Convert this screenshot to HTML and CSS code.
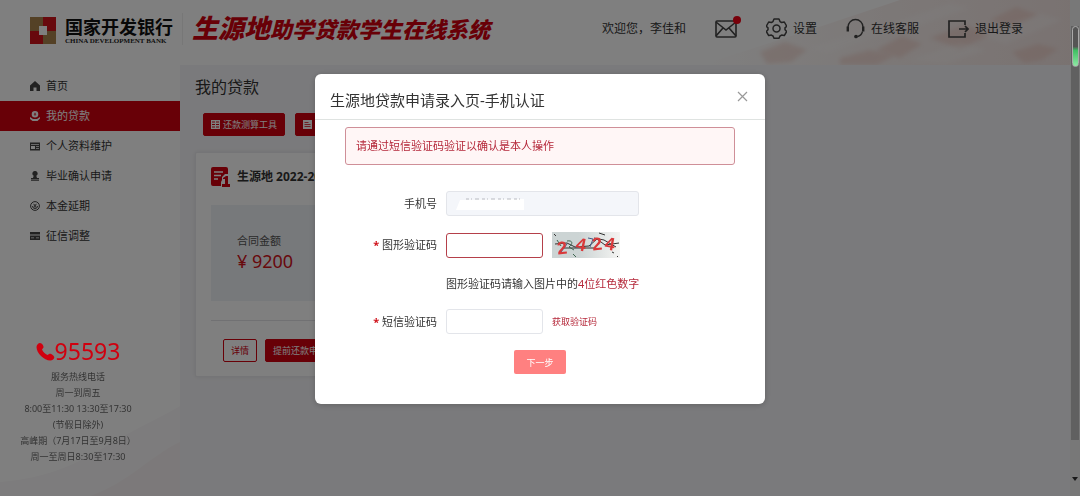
FILE: index.html
```html
<!DOCTYPE html>
<html lang="zh-CN">
<head>
  <meta charset="UTF-8" />
  <meta name="viewport" content="width=device-width, initial-scale=1.0"/>
  <title>生源地助学贷款学生在线系统</title>
  <link rel="stylesheet" href="styles.css">
</head>
<body>

<header class="header">
  <svg class="header-art" viewBox="0 0 380 65" preserveAspectRatio="xMaxYMin slice">
    <defs>
      <linearGradient id="glow" x1="0" y1="0" x2="1" y2="0">
        <stop offset="0" stop-color="#f3e2de" stop-opacity="0"/>
        <stop offset="0.5" stop-color="#f3e2de" stop-opacity="0.5"/>
        <stop offset="1" stop-color="#f0dedb" stop-opacity="0.8"/>
      </linearGradient>
      <filter id="soft"><feGaussianBlur stdDeviation="2"/></filter>
    </defs>
    <path d="M0 65 L110 30 L200 0 H380 V65z" fill="url(#glow)"/>
    <g fill="#e8b8ac" opacity="0.35" filter="url(#soft)">
      <path d="M60 52l25-10 22 8-16 12-24 2z"/>
      <path d="M140 58l30-8 24 6-18 9h-36z"/>
      <path d="M176 50l26-14 20 8-22 14z"/>
      <path d="M230 38l34-13 26 10-30 14z"/>
      <path d="M312 52l26-8 20 5-16 11-18 3z"/>
      <path d="M290 20l26-13 22 8-24 12z"/>
    </g>
    <g fill="#fff" opacity="0.3" filter="url(#soft)">
      <path d="M110 48l60-20 18 5-60 20z"/>
      <path d="M210 60l50-17 26 7-40 14z"/>
      <path d="M280 36l60-22 22 6-56 24z"/>
      <path d="M190 24l60-21 20 5-58 20z"/>
    </g>
  </svg>

  <div class="brand">
    <svg class="brand-mark" viewBox="0 0 26 27">
      <path fill="#a8824c" d="M0 0h13v9H9v5H0z"/>
      <path fill="#d0121b" d="M13 0h13v14h-9V9h-4z"/>
      <path fill="#d0121b" d="M0 14h9v4h4v9H0z"/>
      <path fill="#a8824c" d="M17 14h9v13H13v-9h4z"/>
      <path fill="#fff" d="M9 9h8v9H9z"/>
    </svg>
    <div class="brand-name">
      <span class="brand-cn">国家开发银行</span>
      <span class="brand-en">CHINA DEVELOPMENT BANK</span>
    </div>
  </div>
  <h1 class="system-name"><span class="system-big">生源地</span>助学贷款学生在线系统</h1>

  <nav class="top-nav">
    <span>欢迎您，李佳和</span>
    <a href="#" class="mail" aria-label="消息">
      <svg width="22" height="18" viewBox="0 0 22 18" fill="none" stroke="#444" stroke-width="1.6">
        <rect x="1" y="1" width="20" height="16" rx="1"/>
        <path d="M1 2l10 8 10-8M1 16l7-8M21 16l-7-8"/>
      </svg>
      <i class="dot"></i>
    </a>
    <a href="#">
      <svg width="21" height="21" viewBox="0 0 21 21" fill="none" stroke="#444" stroke-width="1.5">
        <path stroke-linejoin="round" d="M8 1h5l1 2.6 1.6.9 2.7-.5 2.4 4.2-1.7 1.7v1.8l1.7 1.7-2.4 4.2-2.7-.5-1.6.9-1 2.3h-5l-1-2.3-1.6-.9-2.7.5-2.4-4.2 1.7-1.7v-1.800l-1.700-1.700 2.400-4.200 2.700.5 1.600-.9z"/>
        <circle cx="10.500" cy="10.600" r="3.500"/>
      </svg>
      设置
    </a>
    <a href="#">
      <svg width="19" height="21" viewBox="0 0 19 21" fill="none" stroke="#444" stroke-width="1.300">
        <path d="M2 12V9a7.500 7.500 0 0 1 15 0v3"/>
        <path stroke-width="2.400" d="M1.800 8.500v5M17.200 8.500v5"/>
        <path d="M16.500 13.500c-.8 3-2.500 4.500-5 5"/>
        <circle cx="10" cy="18.500" r="1.200" fill="#444"/>
      </svg>
      在线客服
    </a>
    <a href="#">
      <svg width="21" height="18" viewBox="0 0 21 18" fill="none" stroke="#444" stroke-width="1.700">
        <path d="M17 5V1H1v16h16v-4"/>
        <path d="M11 9h9M17 6l3 3-3 3"/>
      </svg>
      退出登录
    </a>
  </nav>
</header>

<div class="layout">
  <aside class="sidebar">
    <nav class="menu">
      <a href="#">
        <svg viewBox="0 0 10 10"><path d="M5 0L0 4.500V10h3.500V6.500h3V10H10V4.500z"/></svg>首页
      </a>
      <a href="#" class="active">
        <svg viewBox="0 0 10 10"><path fill-rule="evenodd" d="M5 0a3.300 3.300 0 1 1 0 6.600A3.300 3.300 0 0 1 5 0zM3.800 1.800l.8 1.200h-.8v.6h.9V5h.6V3.600h.9V3h-.8l.8-1.200h-.6L5 2.700l-.6-.9zM0 6l3 2h4l3-2v1.500L7.500 10h-5L0 8z"/></svg>我的贷款
      </a>
      <a href="#">
        <svg viewBox="0 0 10 10"><path fill-rule="evenodd" d="M0 1.500h10v8H0zM1 3v.8h8V3zM1 5v3h4V5zM6 5v.8h3V5zM6 7v.8h3V7z"/></svg>个人资料维护
      </a>
      <a href="#">
        <svg viewBox="0 0 10 10"><path d="M5 0a2.500 2.500 0 0 1 1.300 4.700L7 7h2v1.500H1V7h2l.7-2.300A2.500 2.500 0 0 1 5 0zM1 9.200h8v.8H1z"/></svg>毕业确认申请
      </a>
      <a href="#">
        <svg class="line-icon" viewBox="0 0 10 10"><circle cx="5" cy="5" r="4.400"/><path d="M2.500 5a2.500 2.500 0 0 0 5 0M3.500 2.800L5 4.600l1.500-1.800M5 4.600v2M3.800 5h2.400"/></svg>本金延期
      </a>
      <a href="#">
        <svg viewBox="0 0 10 10"><path fill-rule="evenodd" d="M0 1h10v2.500H0zM0 4.500h10V9H0zM1 6.500v.8h3v-.8zM6 6.500v.8h3v-.8z"/></svg>征信调整
      </a>
    </nav>

    <div class="hotline">
      <div class="hotline-number">
        <svg width="19" height="19" viewBox="0 0 19 19"><path d="M4 1c2 0 4 3 3.500 4.500L6 7.500c1 2.500 3 4.500 5.500 5.500l2-1.300c1.500-.4 4.800 1.800 4.800 3.600 0 1.500-2 3.200-4 3.200C8 18.500.5 11 .5 5 .5 3 2.500 1 4 1z"/></svg>95593
      </div>
      <p>服务热线电话</p>
      <p>周一到周五</p>
      <p>8:00至11:30 13:30至17:30</p>
      <p>(节假日除外)</p>
      <p>高峰期（7月17日至9月8日）</p>
      <p>周一至周日8:30至17:30</p>
    </div>
    <svg class="side-art" viewBox="0 0 180 90" preserveAspectRatio="none">
      <path d="M0 76c50-4 80-20 110-38S160 12 180 0v90H0z" fill="#fbf9fa"/>
      <path d="M90 90c40-14 60-40 90-54v54z" fill="#f8f3f4"/>
    </svg>
  </aside>

  <main class="main">
    <h2>我的贷款</h2>
    <div class="tools">
      <button type="button" class="btn btn-red">
        <svg viewBox="0 0 9 9" fill="#fff"><path fill-rule="evenodd" d="M0 0h9v9H0zM1 1.500v1h3v-1zM5 1.500v1h3v-1zM1 4v1h3V4zM5 4v1h3V4zM1 6.500v1h3v-1zM5 6.500v1h3v-1z"/></svg>还款测算工具
      </button>
      <button type="button" class="btn btn-red">
        <svg viewBox="0 0 9 9" fill="#fff"><path fill-rule="evenodd" d="M0 0h9v9H0zM1.500 2v.7h4V2zM1.500 4v.7h6V4zM1.500 6v.7h6V6z"/></svg>首贷指南
      </button>
    </div>

    <section class="card">
      <h3>
        <svg width="19" height="20" viewBox="0 0 19 20">
          <path fill="#d0000f" d="M2 0h13a2 2 0 0 1 2 2v5h-3l-3 3v3l-1 2v4H2a2 2 0 0 1-2-2V2a2 2 0 0 1 2-2z"/>
          <path stroke="#fff" stroke-width="1.300" d="M3 5h9M3 8.500h7M3 12h4"/>
          <path fill="#d0000f" d="M12 11l3-2h2v8h2v3h-8v-3h3v-5h-2z"/>
        </svg>
        生源地 2022-2023
      </h3>
      <div class="amount-box">
        <span class="amount-label">合同金额</span>
        <span class="amount">¥ 9200</span>
      </div>
      <div class="card-actions">
        <button type="button" class="btn btn-line">详情</button>
        <button type="button" class="btn btn-red">提前还款申请</button>
      </div>
    </section>
  </main>
</div>

<div class="scrollbar">
  <div class="scroll-thumb"></div>
  <svg width="6" height="4" viewBox="0 0 6 4"><path d="M0 0h6L3 4z" fill="#333"/></svg>
</div>

<div class="overlay">
  <div class="modal" role="dialog" aria-labelledby="modalTitle">
    <div class="modal-header">
      <h2 id="modalTitle">生源地贷款申请录入页-手机认证</h2>
      <button type="button" class="close" aria-label="关闭">
        <svg width="11" height="11" viewBox="0 0 11 11"><path d="M1 1l9 9M10 1l-9 9" stroke="#999" stroke-width="1.200"/></svg>
      </button>
    </div>
    <form class="modal-body">
      <div class="alert">请通过短信验证码验证以确认是本人操作</div>
      <div class="row">
        <label for="phone">手机号</label>
        <div class="phone-field">
          <input type="text" id="phone" class="wide" disabled />
          <svg class="phone-mask" viewBox="0 0 68 13">
            <path d="M4 2l64-1v11H0z" fill="#fff"/>
            <path d="M10 1h56" stroke="#a9acb3" stroke-width="0.800" stroke-dasharray="3 2 1 3 4 3"/>
          </svg>
        </div>
      </div>
      <div class="row">
        <label for="captcha"><b>*</b> 图形验证码</label>
        <input type="text" id="captcha" class="invalid" />
        <svg class="captcha" width="68" height="26" viewBox="0 0 68 26" role="img" aria-label="图形验证码">
          <defs>
            <linearGradient id="paper" x1="0" y1="0" x2="1" y2="0">
              <stop offset="0.400" stop-color="#ccd4d4"/>
              <stop offset="1" stop-color="#f4f4f2"/>
            </linearGradient>
          </defs>
          <rect width="68" height="26" fill="url(#paper)"/>
          <g fill="none" stroke="#333" stroke-width="1">
            <path d="M3 12l12-1 8 4 14-1 8-7 8 6 14-2"/>
            <path d="M12 16h32M42 6l10 2 12 7"/>
            <path stroke="#3e6650" d="M5 8l4 6M15 9c6-1 6 3 2 6l5 3M21 22l3 3"/>
            <path stroke="#455c8a" d="M36 6l5 1-3 8M9 20l6-8"/>
            <path d="M2 2l2 2M47 1l6 2M60 20l2 1M65 24l1 1"/>
          </g>
          <g class="captcha-digits">
            <text x="5" y="22" transform="rotate(-6 10 16)">2</text>
            <text x="24" y="19" transform="rotate(12 30 13)">4</text>
            <text x="40" y="18" transform="rotate(-6 45 12)">2</text>
            <text x="53" y="18" transform="rotate(10 58 12)">4</text>
          </g>
        </svg>
      </div>
      <p class="hint">图形验证码请输入图片中的<em>4位红色数字</em></p>
      <div class="row">
        <label for="sms"><b>*</b> 短信验证码</label>
        <input type="text" id="sms" />
        <a href="#" class="get-code">获取验证码</a>
      </div>
      <button type="submit" class="next">下一步</button>
    </form>
  </div>
</div>

<div class="meter"></div>

</body>
</html>
```
FILE: styles.css
```css
* {
  box-sizing: border-box;
}

body {
  margin: 0;
  min-height: 100vh;
  display: flex;
  flex-direction: column;
  overflow: hidden;
  font-family: "Noto Sans", "Noto Sans CJK SC", sans-serif;
  font-size: 11px;
  line-height: 16px;
  color: #333;
  background: #f5f5f8;
}

h1, h2, h3, p {
  margin: 0;
  font-weight: 400;
}

a {
  color: inherit;
  text-decoration: none;
}

button, input {
  font-family: inherit;
}

svg {
  flex: none;
}

/* Header */
.header {
  position: relative;
  display: flex;
  align-items: center;
  height: 65px;
  padding: 0 57px 8px 30px;
  background: #fff;
}

.header-art {
  position: absolute;
  right: 0;
  top: 0;
  width: 380px;
  height: 65px;
}

.brand {
  display: flex;
  align-items: center;
  gap: 9px;
  padding: 4px 10px 0 0;
  border-right: 1px solid #eee;
}

.brand-mark {
  width: 26px;
  height: 27px;
}

.brand-name {
  display: flex;
  flex-direction: column;
  width: 107px;
  white-space: nowrap;
}

.brand-cn {
  font-size: 18px;
  line-height: 20px;
  font-weight: 700;
  color: #111;
}

.brand-en {
  font-family: "Liberation Serif", serif;
  font-size: 7px;
  line-height: 8px;
  font-weight: 700;
  color: #222;
}

.system-name {
  padding-left: 9px;
  font-size: 22px;
  line-height: 32px;
  font-weight: 900;
  font-style: italic;
  color: #d0000f;
  white-space: nowrap;
}

.system-big {
  font-size: 26px;
}

.top-nav {
  position: relative;
  display: flex;
  align-items: center;
  gap: 29px;
  margin-left: auto;
  font-size: 12px;
  white-space: nowrap;
}

.top-nav a {
  display: flex;
  align-items: center;
  gap: 6px;
}

.top-nav .mail {
  position: relative;
}

.dot {
  position: absolute;
  top: -4px;
  right: -4px;
  width: 8px;
  height: 8px;
  border-radius: 50%;
  background: #f00014;
}

/* Sidebar */
.layout {
  flex: 1;
  display: flex;
}

.sidebar {
  position: relative;
  width: 180px;
  padding-top: 6px;
  background: #fff;
}

.menu a {
  display: flex;
  align-items: center;
  gap: 6px;
  height: 30px;
  padding-left: 30px;
}

.menu svg {
  width: 10px;
  height: 10px;
  fill: #444;
}

.menu .line-icon {
  fill: none;
  stroke: #444;
}

.menu .active {
  background: #d0000f;
  color: #fff;
}

.menu .active svg {
  fill: #fff;
}

.hotline {
  position: relative;
  z-index: 1;
  margin-top: 88px;
  padding-right: 24px;
  font-size: 9px;
  text-align: center;
  white-space: nowrap;
}

.hotline-number {
  display: flex;
  justify-content: center;
  align-items: center;
  height: 24px;
  margin-bottom: 6px;
  font-size: 23px;
  color: #d0000f;
}

.hotline-number svg {
  fill: #d0000f;
}

.side-art {
  position: absolute;
  left: 0;
  bottom: 0;
  width: 100%;
  height: 90px;
}

/* Main */
.main {
  flex: 1;
  padding: 12px 15px;
}

.main h2 {
  font-size: 16px;
  line-height: 20px;
}

.tools {
  display: flex;
  gap: 10px;
  padding: 16px 8px;
}

.btn {
  display: flex;
  align-items: center;
  gap: 3px;
  height: 23px;
  padding: 0 7px;
  border: 1px solid #d0000f;
  border-radius: 2px;
  font-size: 9px;
  white-space: nowrap;
}

.btn svg {
  width: 9px;
  height: 9px;
}

.btn-red {
  background: #d0000f;
  color: #fff;
}

.btn-line {
  background: #fff;
  color: #d0000f;
}

.card {
  max-width: 480px;
  padding: 14px 15px;
  background: #fff;
  border: 1px solid #eaeaee;
  border-radius: 2px;
  box-shadow: 0 0 4px rgba(0, 0, 0, 0.08);
}

.card h3 {
  display: flex;
  align-items: center;
  gap: 7px;
  font-size: 12px;
  line-height: 20px;
  font-weight: 700;
}

.amount-box {
  display: flex;
  flex-direction: column;
  height: 96px;
  margin-top: 18px;
  padding: 28px 26px;
  background: #eff2f6;
}

.amount-label {
  color: #555;
}

.amount {
  font-size: 18px;
  line-height: 24px;
  color: #d0121b;
}

.card-actions {
  display: flex;
  gap: 8px;
  margin-top: 19px;
  padding: 18px 12px 0;
  border-top: 1px solid #e2e2e6;
}

/* Scrollbar */
.scrollbar {
  position: fixed;
  top: 0;
  right: 0;
  bottom: 0;
  width: 10px;
  display: flex;
  flex-direction: column;
  align-items: center;
  justify-content: space-between;
  padding: 26px 0 15px;
  background: #f1f1f1;
}

.scroll-thumb {
  width: 8px;
  height: calc(100% - 41px);
  background: #c1c1c1;
}

.meter {
  position: fixed;
  top: 26px;
  right: 1px;
  width: 7px;
  height: 41px;
  border: 1px solid #aaa;
  border-radius: 4px;
  background: linear-gradient(#555 50%, #3fbf63 60%, #8fe8a5);
}

/* Modal */
.overlay {
  position: fixed;
  inset: 0;
  padding-top: 74px;
  background: rgba(0, 0, 0, 0.5);
}

.modal {
  width: 450px;
  max-width: 100%;
  margin: 0 auto;
  background: #fff;
  border-radius: 6px;
  box-shadow: 0 1px 6px rgba(0, 0, 0, 0.2);
}

.modal-header {
  display: flex;
  align-items: center;
  justify-content: space-between;
  height: 46px;
  padding: 6px 17px 0 15px;
  border-bottom: 1px solid #dfe3e1;
}

.modal-header h2 {
  font-size: 15px;
  line-height: 24px;
}

.close {
  display: flex;
  padding: 0 0 6px;
  border: none;
  background: none;
}

.modal-body {
  padding: 7px 30px 30px;
}

.alert {
  margin-bottom: 26px;
  padding: 10px;
  border: 1px solid #cf8f98;
  border-radius: 3px;
  background: #fff6f6;
  color: #b5283a;
}

.row {
  display: flex;
  align-items: center;
  gap: 9px;
  margin-bottom: 16px;
}

.row label {
  width: 92px;
  text-align: right;
}

.row b {
  color: #d0121b;
}

.row input {
  width: 97px;
  height: 25px;
  padding: 0 10px;
  border: 1px solid #e3e5ea;
  border-radius: 3px;
  background: #fff;
  font-size: 11px;
}

.row .wide {
  width: 193px;
  background: #f4f6fa;
}

.row .invalid {
  border-color: #b5404a;
}

.phone-field {
  position: relative;
  display: flex;
}

.phone-mask {
  position: absolute;
  left: 10px;
  top: 7px;
  width: 68px;
  height: 13px;
}

.captcha-digits {
  fill: #d9393b;
  font-family: "Liberation Sans", sans-serif;
  font-size: 18px;
  font-weight: 700;
}

.hint {
  margin-bottom: 15px;
  padding-left: 101px;
  line-height: 20px;
}

.hint em {
  font-style: normal;
  color: #b5283a;
}

.get-code {
  font-size: 9px;
  color: #b5283a;
}

.next {
  display: block;
  width: 52px;
  height: 24px;
  margin: 0 auto;
  border: none;
  border-radius: 2px;
  background: #ff8080;
  color: #fff;
  font-size: 9px;
}
```
